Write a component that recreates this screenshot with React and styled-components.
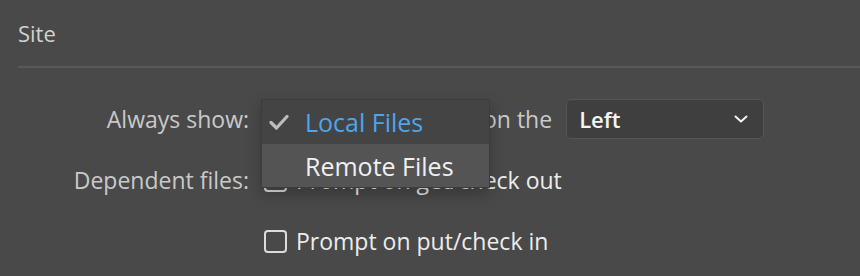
import React from "react";
import styled, { createGlobalStyle } from "styled-components";

const GlobalStyle = createGlobalStyle`
  html, body {
    margin: 0;
    padding: 0;
    background: #494949;
  }
  body {
    font-family: "Open Sans", "Noto Sans", sans-serif;
    -webkit-font-smoothing: antialiased;
  }
`;

const Check = () => (
  <svg width="20" height="16" viewBox="0 0 20 16" fill="none">
    <path d="M2 8.5 L7.5 14 L18 2.5" stroke="#bdbdbd" strokeWidth="3.2" strokeLinecap="round" strokeLinejoin="round" />
  </svg>
);

const Chevron = () => (
  <svg width="14" height="8" viewBox="0 0 14 8" fill="none">
    <path d="M1.5 1.5 L7 6.5 L12.5 1.5" stroke="#f2f2f2" strokeWidth="2" strokeLinecap="round" strokeLinejoin="round" />
  </svg>
);

const App = () => {
  return (
    <>
      <GlobalStyle />
      <StyledPanel>
        <StyledTitle>Site</StyledTitle>
        <StyledDivider />
        <StyledForm>
          <StyledLabel>Always show:</StyledLabel>
          <StyledControls>
            <StyledPopupWrap>
              <StyledHiddenSelect />
              <StyledMenu>
                <StyledMenuItem $active>
                  <StyledCheckSlot>
                    <Check />
                  </StyledCheckSlot>
                  Local Files
                </StyledMenuItem>
                <StyledMenuItem>
                  <StyledCheckSlot />
                  Remote Files
                </StyledMenuItem>
              </StyledMenu>
            </StyledPopupWrap>
            <StyledText>on the</StyledText>
            <StyledSelect>
              <span>Left</span>
              <Chevron />
            </StyledSelect>
          </StyledControls>

          <StyledLabel>Dependent files:</StyledLabel>
          <StyledCheckRow>
            <StyledBox />
            <StyledCheckText>Prompt on get/check out</StyledCheckText>
          </StyledCheckRow>

          <StyledLabel />
          <StyledCheckRow>
            <StyledBox />
            <StyledCheckText>Prompt on put/check in</StyledCheckText>
          </StyledCheckRow>
        </StyledForm>
      </StyledPanel>
    </>
  );
};

export default App;

const StyledPanel = styled.div`
  width: 860px;
  height: 276px;
  overflow: hidden;
  padding: 19px 0 0 18px;
  box-sizing: border-box;
`;
const StyledTitle = styled.div`
  font-size: 22px;
  line-height: 28px;
  color: #d2d2d2;
`;
const StyledDivider = styled.div`
  height: 2px;
  margin-top: 19px;
  background: #585858;
`;
const StyledForm = styled.div`
  display: grid;
  grid-template-columns: 231px 1fr;
  grid-auto-rows: 40px;
  column-gap: 13px;
  row-gap: 21px;
  margin-top: 31px;
  align-items: center;
`;
const StyledLabel = styled.div`
  justify-self: end;
  font-size: 23px;
  color: #c9c9c9;
  white-space: nowrap;
`;
const StyledControls = styled.div`
  display: flex;
  align-items: center;
  height: 40px;
`;
const StyledPopupWrap = styled.div`
  position: relative;
  width: 212px;
  height: 40px;
  margin-right: 9px;
`;
const StyledHiddenSelect = styled.div`
  width: 100%;
  height: 100%;
  border-radius: 4px;
  background: #404040;
`;
const StyledMenu = styled.div`
  position: absolute;
  top: 0;
  left: -1px;
  width: 229px;
  background: #545454;
  border: 1px solid #3c3c3c;
  box-sizing: border-box;
  box-shadow: 0 6px 14px rgba(0, 0, 0, 0.25);
  z-index: 2;
`;
const StyledMenuItem = styled.div`
  display: flex;
  align-items: center;
  height: ${(p) => (p.$active ? "44px" : "43px")};
  font-size: 25px;
  color: ${(p) => (p.$active ? "#4ca6ec" : "#f0f0f0")};
  background: ${(p) => (p.$active ? "#444444" : "#545454")};
`;
const StyledCheckSlot = styled.div`
  display: flex;
  align-items: center;
  width: 20px;
  padding-left: 7px;
  margin-right: 16px;
`;
const StyledText = styled.div`
  font-size: 23px;
  color: #c9c9c9;
  margin-right: 14px;
`;
const StyledSelect = styled.div`
  display: flex;
  align-items: center;
  justify-content: space-between;
  width: 198px;
  height: 40px;
  box-sizing: border-box;
  padding: 0 15px 0 12px;
  border: 1px solid #565656;
  border-radius: 5px;
  background: #3f3f3f;
  font-size: 22px;
  font-weight: 600;
  color: #f4f4f4;
`;
const StyledCheckRow = styled.div`
  display: flex;
  align-items: center;
  gap: 9px;
  height: 40px;
  padding-left: 2px;
`;
const StyledBox = styled.div`
  width: 23px;
  height: 23px;
  box-sizing: border-box;
  border: 2px solid #dcdcdc;
  border-radius: 4px;
`;
const StyledCheckText = styled.div`
  font-size: 23px;
  color: #ececec;
`;
